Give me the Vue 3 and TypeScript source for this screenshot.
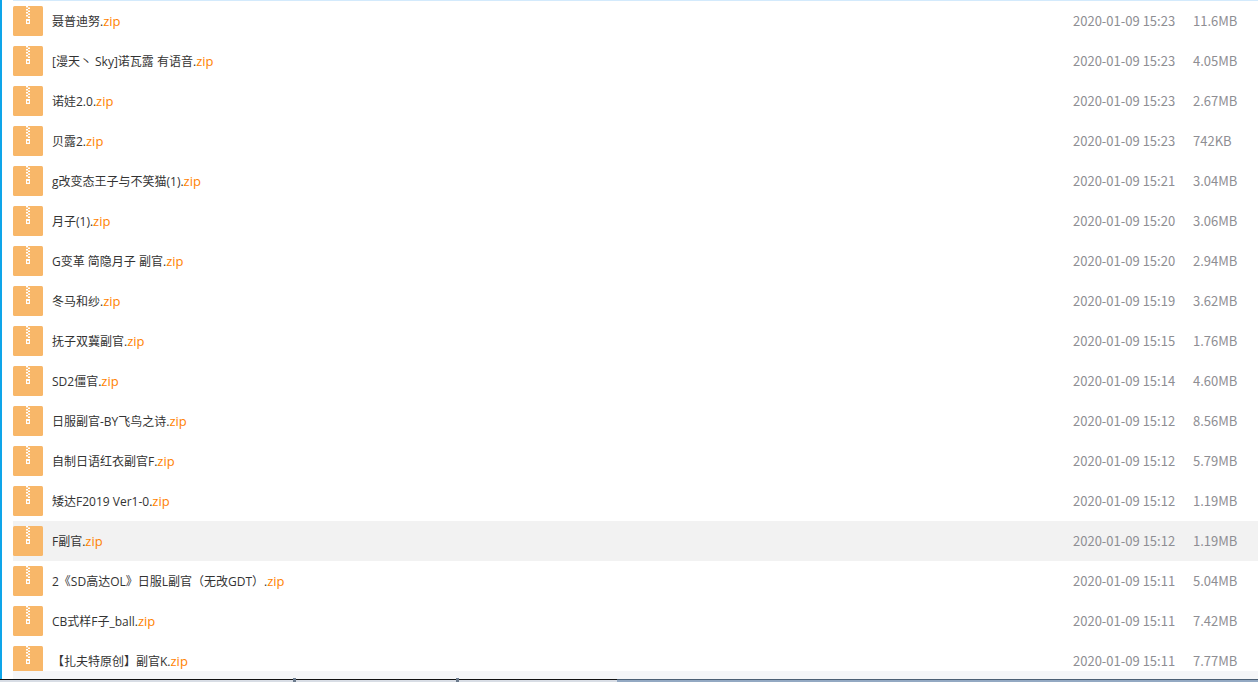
<script setup lang="ts">
interface FileRow {
	name: string;
	time: string;
	size: string;
	hover?: boolean;
}

const files: FileRow[] = [
	{ name: "聂普迪努", time: "2020-01-09 15:23", size: "11.6MB" },
	{ name: "[漫天丶 Sky]诺瓦露 有语音", time: "2020-01-09 15:23", size: "4.05MB" },
	{ name: "诺娃2.0", time: "2020-01-09 15:23", size: "2.67MB" },
	{ name: "贝露2", time: "2020-01-09 15:23", size: "742KB" },
	{ name: "g改变态王子与不笑猫(1)", time: "2020-01-09 15:21", size: "3.04MB" },
	{ name: "月子(1)", time: "2020-01-09 15:20", size: "3.06MB" },
	{ name: "G变革 简隐月子 副官", time: "2020-01-09 15:20", size: "2.94MB" },
	{ name: "冬马和纱", time: "2020-01-09 15:19", size: "3.62MB" },
	{ name: "抚子双冀副官", time: "2020-01-09 15:15", size: "1.76MB" },
	{ name: "SD2僵官", time: "2020-01-09 15:14", size: "4.60MB" },
	{ name: "日服副官-BY飞鸟之诗", time: "2020-01-09 15:12", size: "8.56MB" },
	{ name: "自制日语红衣副官F", time: "2020-01-09 15:12", size: "5.79MB" },
	{ name: "矮达F2019 Ver1-0", time: "2020-01-09 15:12", size: "1.19MB" },
	{ name: "F副官", time: "2020-01-09 15:12", size: "1.19MB", hover: true },
	{ name: "2《SD高达OL》日服L副官（无改GDT）", time: "2020-01-09 15:11", size: "5.04MB" },
	{ name: "CB式样F子_ball", time: "2020-01-09 15:11", size: "7.42MB" },
	{ name: "【扎夫特原创】副官K", time: "2020-01-09 15:11", size: "7.77MB" },
];
</script>

<template>
	<div class="page">
		<div class="main">
			<div class="list">
				<div v-for="f in files" :key="f.name" class="row" :class="{ hover: f.hover }">
					<svg class="zip-icon" viewBox="0 0 30 30" aria-hidden="true">
						<rect width="30" height="30" rx="1.5" fill="#f8b769" />
						<g fill="#fff">
							<rect x="13" y="0" width="2" height="1.5" />
							<rect x="15" y="1.5" width="2" height="1.5" />
							<rect x="13" y="3" width="2" height="1.5" />
							<rect x="15" y="4.5" width="2" height="1.5" />
							<rect x="13" y="6" width="2" height="1.5" />
							<rect x="15" y="7.5" width="2" height="1.5" />
							<rect x="13" y="9" width="2" height="1.5" />
							<rect x="15" y="10.5" width="2" height="1.5" />
							<rect x="13" y="13" width="4" height="5" />
						</g>
						<rect x="14" y="15" width="2" height="1.6" fill="#f8b769" />
					</svg>
					<span class="name">{{ f.name }}.<em>zip</em></span>
					<span class="time">{{ f.time }}</span>
					<span class="size">{{ f.size }}</span>
				</div>
			</div>
			<div class="foot"></div>
		</div>
		<div class="frame">
			<div class="frame-left">
				<i class="tick tick-a"></i>
				<i class="tick tick-b"></i>
			</div>
			<div class="frame-right"></div>
		</div>
	</div>
</template>

<style>
html,
body {
	margin: 0;
	overflow: hidden;
	background: #fff;
}
</style>

<style scoped>
.page {
	display: flex;
	flex-direction: column;
	height: 682px;
	font: 13px/20px "Noto Sans CJK SC", "Liberation Sans", sans-serif;
	color: #424e67;
}
.main {
	flex: 0 0 679px;
	display: flex;
	flex-direction: column;
	border-left: 2px solid #0ea5e9;
	box-sizing: border-box;
}
.list {
	flex: 0 0 671px;
	margin-left: 11px;
	overflow: hidden;
	border-top: 1px solid #d3eafc;
	box-sizing: border-box;
}
.row {
	display: flex;
	align-items: center;
	height: 40px;
}
.row.hover {
	background: #f2f2f2;
}
.zip-icon {
	flex: none;
	width: 30px;
	height: 30px;
	margin-right: 9px;
}
.name {
	flex: 1;
	white-space: nowrap;
	color: #333;
	font: 12px/20px "Open Sans", "Noto Sans CJK SC", sans-serif;
}
.name em {
	font-style: normal;
	color: #ff8200;
	font-size: 13px;
}
.time,
.size {
	color: #8e8e93;
}
.time {
	width: 120px;
}
.size {
	width: 65px;
}
.foot {
	flex: 0 0 8px;
	margin-left: 11px;
	background: #f5f6f8;
}
.frame {
	flex: 0 0 3px;
	display: flex;
}
.frame-left {
	position: relative;
	flex: 0 0 617px;
	border-top: 1px solid #111;
	background: #d8dde5;
	box-sizing: border-box;
}
.frame-right {
	flex: 1;
	border-top: 1px solid #4d6075;
	background: #93a9c3;
	box-sizing: border-box;
}
.tick {
	position: absolute;
	top: -2px;
	width: 3px;
	height: 4px;
	background: #6b7a8c;
}
.tick-a {
	left: 293px;
}
.tick-b {
	left: 456px;
}
</style>
